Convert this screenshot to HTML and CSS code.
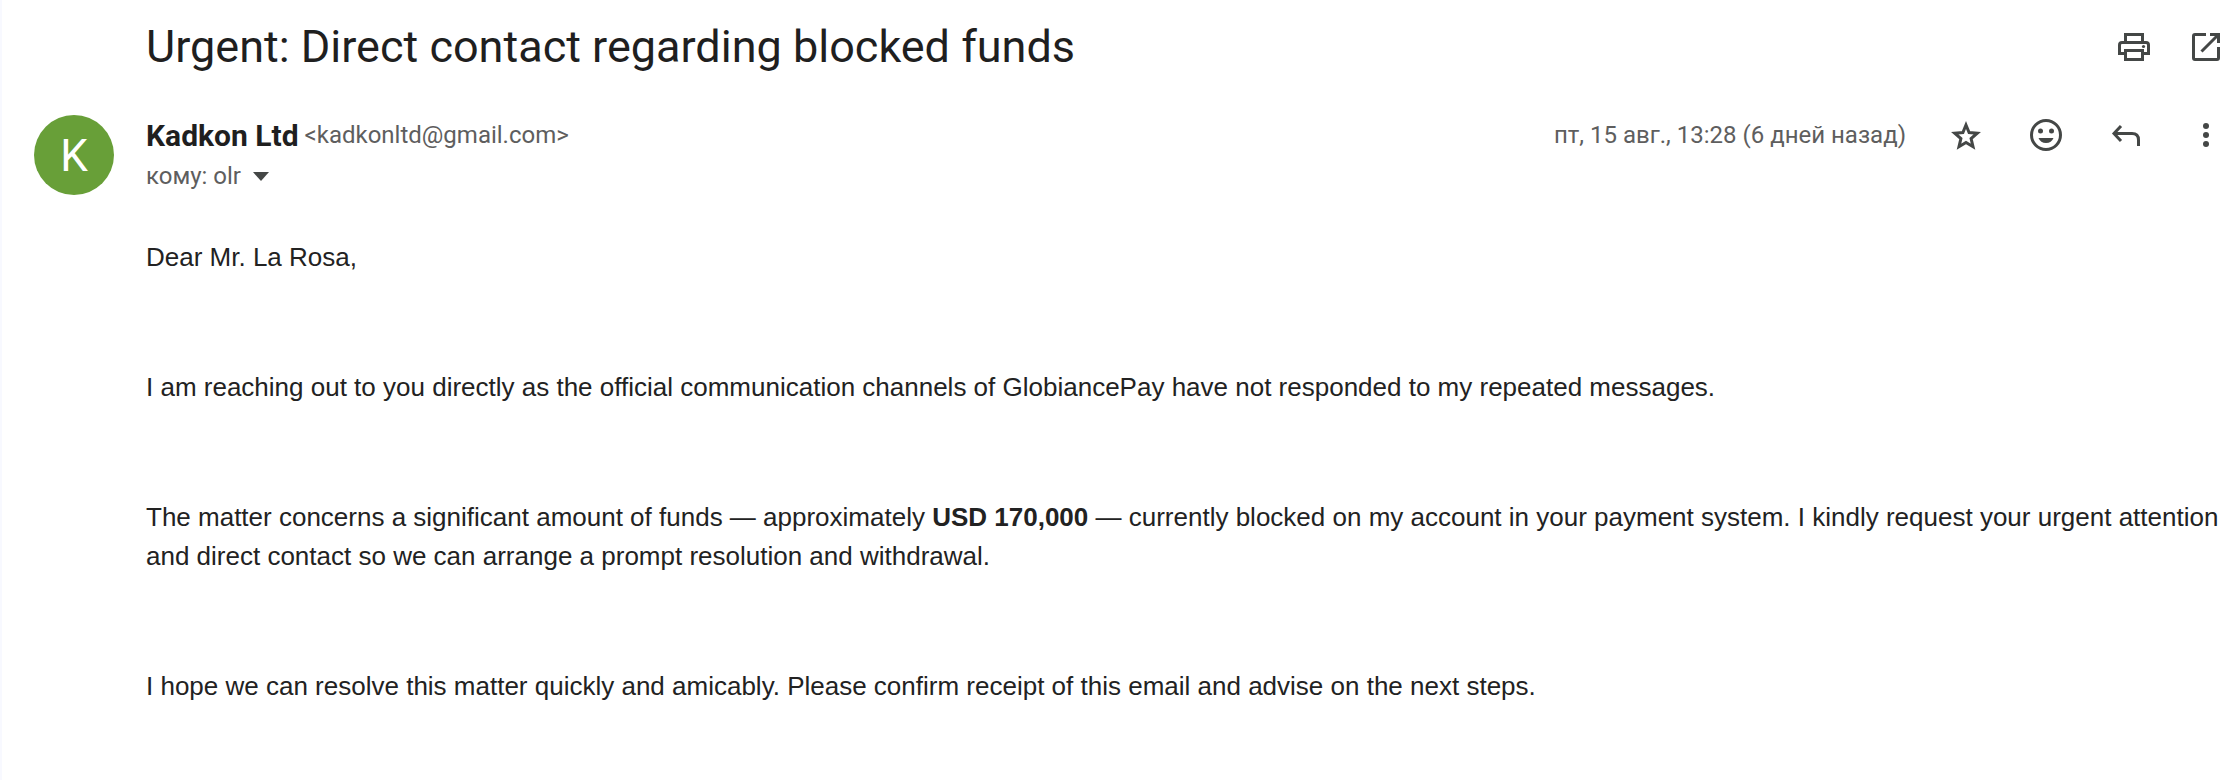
FILE: index.html
```html
<!DOCTYPE html>
<html lang="ru">
<head>
<meta charset="utf-8">
<meta name="viewport" content="width=device-width, initial-scale=1">
<title>Urgent: Direct contact regarding blocked funds</title>
<link rel="stylesheet" href="styles.css">
</head>
<body>
<main class="message">
  <header class="subject-bar">
    <h1 class="subject">Urgent: Direct contact regarding blocked funds</h1>
    <div class="subject-actions">
      <button class="icon-button" type="button" aria-label="Печать">
        <svg class="icon" viewBox="0 0 40 40" fill="none" stroke="currentColor" stroke-width="3">
          <path d="M11.500 15V7.500H28.500V15"/>
          <path d="M11.500 26.500H5.500V18Q5.500 15.500 8 15.500H32Q34.500 15.500 34.500 18V26.500H28.500"/>
          <path d="M11.500 23.500H28.500V32.500H11.500Z"/>
          <circle cx="29.500" cy="19.500" r="1.600" fill="currentColor" stroke="none"/>
        </svg>
      </button>
      <button class="icon-button" type="button" aria-label="В новом окне">
        <svg class="icon" viewBox="0 0 40 40" fill="none" stroke="currentColor" stroke-width="3">
          <path d="M20 7.500H9Q7.500 7.500 7.500 9V31Q7.500 32.500 9 32.500H31Q32.500 32.500 32.500 31V20"/>
          <path d="M24 7.500H32.500V16M32 8L15.500 24.500"/>
        </svg>
      </button>
    </div>
  </header>
  <article class="mail">
    <div class="avatar" aria-hidden="true">K</div>
    <div class="mail-main">
      <div class="mail-head">
        <div class="sender">
          <div class="from"><span class="name">Kadkon Ltd</span><span class="address">&lt;kadkonltd@gmail.com&gt;</span></div>
          <button class="recipient" type="button">кому: olr
            <svg class="caret" viewBox="0 0 16 9" fill="currentColor"><path d="M0 0H16L8 9Z"/></svg>
          </button>
        </div>
        <div class="meta">
          <time class="date" datetime="08-15T13:28">пт, 15 авг., 13:28 (6 дней назад)</time>
          <button class="icon-button" type="button" aria-label="Пометить">
            <svg class="icon" viewBox="0 0 40 40" fill="none" stroke="currentColor" stroke-width="3">
              <path d="M20 10L23.100 17.500L31.300 18.200L25.100 23.600L27 31.700L20 27.400L13 31.700L14.900 23.600L8.700 18.200L16.900 17.500Z" stroke-miterlimit="8"/>
            </svg>
          </button>
          <button class="icon-button" type="button" aria-label="Добавить реакцию">
            <svg class="icon" viewBox="0 0 40 40" fill="currentColor">
              <circle cx="20" cy="20" r="14.500" fill="none" stroke="currentColor" stroke-width="3"/>
              <circle cx="14.500" cy="16" r="2.500"/><circle cx="25.500" cy="16" r="2.500"/>
              <path d="M12.500 23H27.500Q25.500 28 20 28Q14.500 28 12.500 23Z"/>
            </svg>
          </button>
          <button class="icon-button" type="button" aria-label="Ответить">
            <svg class="icon" viewBox="0 0 40 40" fill="none" stroke="currentColor" stroke-width="3">
              <path d="M15 11L8 18.500L15 26M8 18.500H26Q32.500 18.500 32.500 25V31"/>
            </svg>
          </button>
          <button class="icon-button" type="button" aria-label="Ещё">
            <svg class="icon" viewBox="0 0 40 40" fill="currentColor">
              <circle cx="20" cy="11" r="3"/><circle cx="20" cy="20" r="3"/><circle cx="20" cy="29" r="3"/>
            </svg>
          </button>
        </div>
      </div>
      <div class="body" lang="en">
        <p>Dear Mr. La Rosa,</p>
        <p>I am reaching out to you directly as the official communication channels of GlobiancePay have not responded to my repeated messages.</p>
        <p>The matter concerns a significant amount of funds — approximately <b>USD 170,000</b> — currently blocked on my account in your payment system. I kindly request your urgent attention and direct contact so we can arrange a prompt resolution and withdrawal.</p>
        <p>I hope we can resolve this matter quickly and amicably. Please confirm receipt of this email and advise on the next steps.</p>
      </div>
    </div>
  </article>
</main>
</body>
</html>
```
FILE: styles.css
```css
* { box-sizing: border-box; }

body {
  margin: 0;
  background: #fff;
  color: #1f1f1f;
  font-family: Roboto, "Noto Sans", sans-serif;
}

.message {
  min-height: 100vh;
  padding: 16px 10px 0 32px;
  border-left: 2px solid #f8f9ff;
}

.subject-bar {
  display: flex;
  align-items: center;
  justify-content: space-between;
  gap: 32px;
  min-height: 62px;
  padding-left: 112px;
}

.subject {
  margin: 0;
  font-size: 45px;
  font-weight: 400;
  line-height: 56px;
}

.subject-actions {
  display: flex;
  gap: 32px;
}

.icon-button {
  display: flex;
  padding: 0;
  border: 0;
  background: none;
  color: #444746;
  cursor: pointer;
}

.icon {
  width: 40px;
  height: 40px;
}

.mail {
  display: flex;
  gap: 32px;
  padding-top: 37px;
}

.avatar {
  flex: none;
  width: 80px;
  height: 80px;
  border-radius: 50%;
  background: #689f38;
  color: #fff;
  font-size: 44px;
  line-height: 82px;
  text-align: center;
}

.mail-main { flex: 1; }

.mail-head {
  display: flex;
  align-items: flex-start;
  justify-content: space-between;
}

.from {
  display: flex;
  align-items: center;
  gap: 6px;
  line-height: 41px;
}

.name {
  font-size: 30px;
  font-weight: 700;
}

.address, .recipient, .date {
  color: #5e5e5e;
  font-family: inherit;
  font-size: 24px;
}

.recipient {
  display: flex;
  align-items: center;
  gap: 12px;
  padding: 0;
  border: 0;
  background: none;
  line-height: 40px;
}

.caret {
  width: 16px;
  height: 9px;
  color: #444746;
}

.meta {
  display: flex;
  align-items: center;
  gap: 40px;
}

.body {
  padding-top: 42px;
  color: #222;
  font-family: "Liberation Sans", Arial, sans-serif;
  font-size: 26px;
  line-height: 39px;
}

.body p { margin: 0 0 91px; }
```
